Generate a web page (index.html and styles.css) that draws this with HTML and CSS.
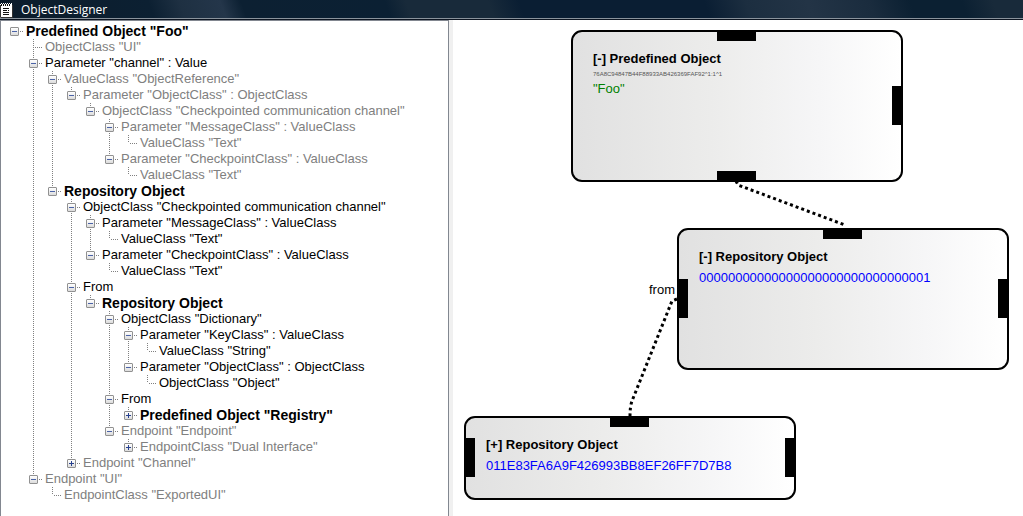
FILE: index.html
```html
<!DOCTYPE html>
<html lang="en">
<head>
<meta charset="utf-8">
<title>ObjectDesigner</title>
<link rel="stylesheet" href="styles.css">
</head>
<body>
<header class="titlebar">
  <svg class="app-icon" width="13" height="16" viewBox="0 0 13 16" aria-hidden="true">
    <path d="M0 2h12v14H0z" fill="#fff"/>
    <path d="M1.500 1v1M3.500 1v1M5.500 1v1M7.500 1v1M9.500 1v1M11.500 1v1" stroke="#fff"/>
    <path d="M1.500 2v2M3.500 2v2M5.500 2v2M7.500 2v2M9.500 2v2M3 6.500h6M3 8.500h4M8 8.500h1M3 10.500h6M3 12.500h6" stroke="#111"/>
    <path d="M.500 3v12.500h12V3" fill="none" stroke="#333"/>
  </svg>
  <h1 class="app-name">ObjectDesigner</h1>
</header>
<main class="workspace">
  <nav class="tree-pane" aria-label="Object tree">
    <ul class="tree">
      <li><div class="row strong"><button class="toggle" aria-label="Collapse"></button><span class="label">Predefined Object "Foo"</span></div>
        <ul>
          <li><div class="row leaf dim"><span class="label">ObjectClass "UI"</span></div></li>
          <li><div class="row"><button class="toggle" aria-label="Collapse"></button><span class="label">Parameter "channel" : Value</span></div>
            <ul>
              <li><div class="row dim"><button class="toggle" aria-label="Collapse"></button><span class="label">ValueClass "ObjectReference"</span></div>
                <ul>
                  <li><div class="row dim"><button class="toggle" aria-label="Collapse"></button><span class="label">Parameter "ObjectClass" : ObjectClass</span></div>
                    <ul>
                      <li><div class="row dim"><button class="toggle" aria-label="Collapse"></button><span class="label">ObjectClass "Checkpointed communication channel"</span></div>
                        <ul>
                          <li><div class="row dim"><button class="toggle" aria-label="Collapse"></button><span class="label">Parameter "MessageClass" : ValueClass</span></div>
                            <ul><li><div class="row leaf dim"><span class="label">ValueClass "Text"</span></div></li></ul>
                          </li>
                          <li><div class="row dim"><button class="toggle" aria-label="Collapse"></button><span class="label">Parameter "CheckpointClass" : ValueClass</span></div>
                            <ul><li><div class="row leaf dim"><span class="label">ValueClass "Text"</span></div></li></ul>
                          </li>
                        </ul>
                      </li>
                    </ul>
                  </li>
                </ul>
              </li>
              <li><div class="row strong"><button class="toggle" aria-label="Collapse"></button><span class="label">Repository Object</span></div>
                <ul>
                  <li><div class="row"><button class="toggle" aria-label="Collapse"></button><span class="label">ObjectClass "Checkpointed communication channel"</span></div>
                    <ul>
                      <li><div class="row"><button class="toggle" aria-label="Collapse"></button><span class="label">Parameter "MessageClass" : ValueClass</span></div>
                        <ul><li><div class="row leaf"><span class="label">ValueClass "Text"</span></div></li></ul>
                      </li>
                      <li><div class="row"><button class="toggle" aria-label="Collapse"></button><span class="label">Parameter "CheckpointClass" : ValueClass</span></div>
                        <ul><li><div class="row leaf"><span class="label">ValueClass "Text"</span></div></li></ul>
                      </li>
                    </ul>
                  </li>
                  <li><div class="row"><button class="toggle" aria-label="Collapse"></button><span class="label">From</span></div>
                    <ul>
                      <li><div class="row strong"><button class="toggle" aria-label="Collapse"></button><span class="label">Repository Object</span></div>
                        <ul>
                          <li><div class="row"><button class="toggle" aria-label="Collapse"></button><span class="label">ObjectClass "Dictionary"</span></div>
                            <ul>
                              <li><div class="row"><button class="toggle" aria-label="Collapse"></button><span class="label">Parameter "KeyClass" : ValueClass</span></div>
                                <ul><li><div class="row leaf"><span class="label">ValueClass "String"</span></div></li></ul>
                              </li>
                              <li><div class="row"><button class="toggle" aria-label="Collapse"></button><span class="label">Parameter "ObjectClass" : ObjectClass</span></div>
                                <ul><li><div class="row leaf"><span class="label">ObjectClass "Object"</span></div></li></ul>
                              </li>
                            </ul>
                          </li>
                          <li><div class="row"><button class="toggle" aria-label="Collapse"></button><span class="label">From</span></div>
                            <ul><li><div class="row strong"><button class="toggle closed" aria-label="Expand"></button><span class="label">Predefined Object "Registry"</span></div></li></ul>
                          </li>
                          <li><div class="row dim"><button class="toggle" aria-label="Collapse"></button><span class="label">Endpoint "Endpoint"</span></div>
                            <ul><li><div class="row dim"><button class="toggle closed" aria-label="Expand"></button><span class="label">EndpointClass "Dual Interface"</span></div></li></ul>
                          </li>
                        </ul>
                      </li>
                    </ul>
                  </li>
                  <li><div class="row dim"><button class="toggle closed" aria-label="Expand"></button><span class="label">Endpoint "Channel"</span></div></li>
                </ul>
              </li>
            </ul>
          </li>
          <li><div class="row dim"><button class="toggle" aria-label="Collapse"></button><span class="label">Endpoint "UI"</span></div>
            <ul><li><div class="row leaf dim"><span class="label">EndpointClass "ExportedUI"</span></div></li></ul>
          </li>
        </ul>
      </li>
    </ul>
  </nav>
  <div class="splitter"></div>
  <section class="canvas" aria-label="Object diagram">
    <svg class="links" width="570" height="496" viewBox="0 0 570 496" aria-hidden="true">
      <path d="M283 161L285 165L392 205" />
      <path d="M224 279L219 281L179 381Q177 386 177 397" />
    </svg>
    <article class="node node-foo">
      <h2 class="node-title">[-] Predefined Object</h2>
      <p class="node-hash">76A8C94847B44F88933AB426369FAF92^1:1^1</p>
      <p class="node-name">"Foo"</p>
      <i class="port top"></i><i class="port right"></i><i class="port bottom"></i>
    </article>
    <article class="node node-repo">
      <h2 class="node-title">[-] Repository Object</h2>
      <p class="node-id">00000000000000000000000000000001</p>
      <i class="port top"></i><i class="port left"></i><i class="port right"></i>
    </article>
    <span class="link-label">from</span>
    <article class="node node-closed">
      <h2 class="node-title">[+] Repository Object</h2>
      <p class="node-id">011E83FA6A9F426993BB8EF26FF7D7B8</p>
      <i class="port top"></i><i class="port left"></i><i class="port right"></i>
    </article>
  </section>
</main>
</body>
</html>
```
FILE: styles.css
```css
* { box-sizing: border-box; }

body {
  margin: 0;
  min-height: 100vh;
  display: flex;
  flex-direction: column;
  background: #fff;
  color: #000;
  font: 13px/16px "Liberation Sans", Arial, sans-serif;
}

h1, h2, p, ul { margin: 0; padding: 0; }

.titlebar {
  display: flex;
  align-items: center;
  gap: 8px;
  height: 20px;
  border-bottom: 1px solid #0c1420;
  box-shadow: inset 0 -1px #8a939c;
  background: linear-gradient(70deg, #0c1c2b 0%, #0c2032 15%, #1e3042 18%, #24364a 22%, #0c2032 24%, #0b2033 38%, #182a3a 40%, #182a3a 48%, #0a1e33 51%, #0a1e33 69%, #1c2e40 73%, #233446 79%, #1a2c3e 85%, #0b2032 89%, #0b2032 94%, #182a3a 97%);
}

.app-name {
  color: #fff;
  font: 12px/16px "Open Sans", "Noto Sans", sans-serif;
}

.workspace {
  flex: 1;
  display: grid;
  grid-template-columns: minmax(0, 449fr) 4px minmax(0, 570fr);
}

.tree-pane {
  padding: 2px 0 0 9px;
  border: 1px solid #828790;
  border-bottom: 0;
  overflow: hidden;
}

.splitter { background: #f0f0f0; }

.tree, .tree ul { list-style: none; }
.tree ul { padding-left: 19px; }

.tree ul > li {
  background: repeating-linear-gradient(#808080 0 1px, transparent 1px 2px) 4px 0 / 1px 100% no-repeat;
}
.tree ul > li:last-child { background-size: 1px 8px; }

.row {
  display: flex;
  align-items: center;
  height: 16px;
  white-space: nowrap;
}
.strong { font-size: 14px; font-weight: bold; }
.dim { color: #808080; }

.label {
  display: flex;
  align-items: center;
}
.label::before {
  content: "";
  width: 3px;
  height: 1px;
  margin: 0 3px 0 1px;
  background: repeating-linear-gradient(90deg, #808080 0 1px, transparent 1px 2px);
}
.leaf { padding-left: 5px; }
.leaf .label::before { width: 8px; margin: 0 2px 0 1px; }

.toggle {
  width: 9px;
  height: 9px;
  padding: 0;
  border: 1px solid #919191;
  border-radius: 1px;
  background:
    linear-gradient(#4b63a7, #4b63a7) 1px 3px / 5px 1px no-repeat,
    linear-gradient(#fff, #dcdcdc);
}
.toggle.closed {
  background:
    linear-gradient(#27418f, #27418f) 1px 3px / 5px 1px no-repeat,
    linear-gradient(#27418f, #27418f) 3px 1px / 1px 5px no-repeat,
    linear-gradient(#fff, #dcdcdc);
}

.canvas {
  position: relative;
  overflow: hidden;
}

.links {
  position: absolute;
  top: 0;
  left: 0;
  fill: none;
  stroke: #000;
  stroke-width: 3;
  stroke-dasharray: 3 3;
}

.node {
  position: absolute;
  width: 332px;
  padding: 19px 20px;
  border: 2px solid #000;
  border-radius: 11px;
  background: linear-gradient(90deg, #e1e1e1, #ececeb 42%, #f6f6f7 75%, #fff);
}
.node-foo { left: 118px; top: 10px; height: 152px; }
.node-repo { left: 224px; top: 208px; height: 142px; }
.node-closed { left: 11px; top: 396px; height: 84px; }

.node-title { font-size: 13px; line-height: 16px; }
.node-hash {
  color: #555;
  font-size: 6px;
  line-height: 14px;
}
.node-name { color: #008000; }
.node-id { margin-top: 4px; color: #0000ff; line-height: 18px; }

.link-label { position: absolute; left: 196px; top: 262px; }

.port {
  position: absolute;
  background: #000;
}
.port.top, .port.bottom {
  left: calc(50% - 20px);
  width: 39px;
  height: 10px;
}
.port.left, .port.right {
  top: calc(50% - 20px);
  width: 10px;
  height: 39px;
}
.port.top { top: -1px; }
.port.bottom { bottom: -1px; }
.port.left { left: -1px; }
.port.right { right: -1px; }
```
